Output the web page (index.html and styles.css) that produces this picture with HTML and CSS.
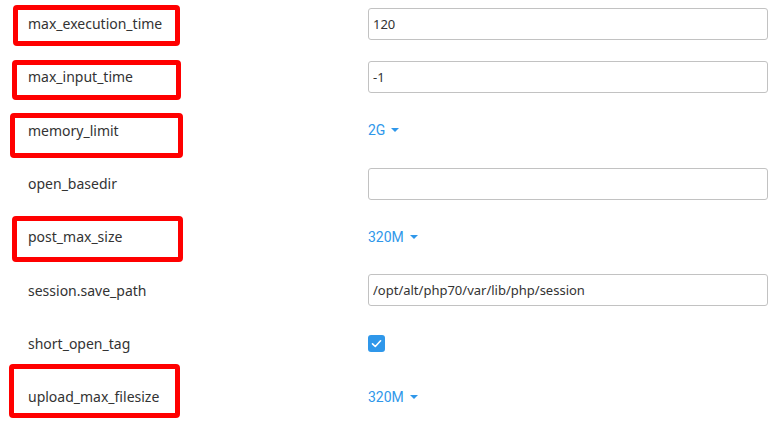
FILE: index.html
```html
<!DOCTYPE html>
<html lang="en">
<head>
    <meta charset="UTF-8">
    <title>PHP Options</title>
    <link rel="stylesheet" href="styles.css">
</head>
<body>
    <div class="options">
        <div class="row">
            <span class="mark mark-1"></span>
            <div class="name">max_execution_time</div>
            <div class="value"><input class="field" type="text" value="120"></div>
        </div>
        <div class="row">
            <span class="mark mark-2"></span>
            <div class="name">max_input_time</div>
            <div class="value"><input class="field" type="text" value="-1"></div>
        </div>
        <div class="row">
            <span class="mark mark-3"></span>
            <div class="name">memory_limit</div>
            <div class="value"><span class="dropdown">2G <span class="caret"></span></span></div>
        </div>
        <div class="row">
            <div class="name">open_basedir</div>
            <div class="value"><input class="field" type="text" value=""></div>
        </div>
        <div class="row">
            <span class="mark mark-4"></span>
            <div class="name">post_max_size</div>
            <div class="value"><span class="dropdown">320M <span class="caret"></span></span></div>
        </div>
        <div class="row">
            <div class="name">session.save_path</div>
            <div class="value"><input class="field" type="text" value="/opt/alt/php70/var/lib/php/session"></div>
        </div>
        <div class="row">
            <div class="name">short_open_tag</div>
            <div class="value">
                <span class="check">
                    <svg width="17" height="17" viewBox="0 0 17 17">
                        <rect width="17" height="17" rx="3" fill="#2f97ea"/>
                        <path d="M4.5 8.8 L7.3 11.5 L12.6 5.8" fill="none" stroke="#fff" stroke-width="1.6" stroke-linecap="round" stroke-linejoin="round"/>
                    </svg>
                </span>
            </div>
        </div>
        <div class="row">
            <span class="mark mark-5"></span>
            <div class="name">upload_max_filesize</div>
            <div class="value"><span class="dropdown">320M <span class="caret"></span></span></div>
        </div>
    </div>
</body>
</html>
```

FILE: styles.css
```css
body {
    margin: 0;
    background: #fff;
    font-family: "Noto Sans", sans-serif;
    color: #333;
}
.options {
    margin-top: -3px;
}
.row {
    position: relative;
    display: grid;
    grid-template-columns: 368px 400px;
    align-items: center;
    height: 53.33px;
}
.name {
    padding-left: 28px;
    font-size: 14px;
}
.value {
    display: flex;
    align-items: center;
}
.field {
    box-sizing: border-box;
    width: 400px;
    height: 32px;
    margin: 0;
    padding: 0 4px;
    border: 1px solid #c2c2c2;
    border-radius: 3px;
    font-family: "Noto Sans", sans-serif;
    font-size: 13px;
    color: #333;
    outline: none;
}
.dropdown {
    display: inline-flex;
    align-items: center;
    font-family: Roboto, sans-serif;
    font-size: 14px;
    color: #2f97ea;
}
.caret {
    display: inline-block;
    margin-left: 6px;
    border-left: 4px solid transparent;
    border-right: 4px solid transparent;
    border-top: 4px solid #2f97ea;
}
.check {
    display: flex;
}
.mark {
    position: absolute;
    box-sizing: border-box;
    border: 5px solid #ff0000;
    border-radius: 4px;
}
.mark-1 { left: 13px; top: 8px; width: 167px; height: 41px; }
.mark-2 { left: 12px; top: 10px; width: 169px; height: 40px; }
.mark-3 { left: 10px; top: 9px; width: 173px; height: 45px; }
.mark-4 { left: 12px; top: 6px; width: 171px; height: 46px; }
.mark-5 { left: 9px; top: -6px; width: 171px; height: 54px; }
```
